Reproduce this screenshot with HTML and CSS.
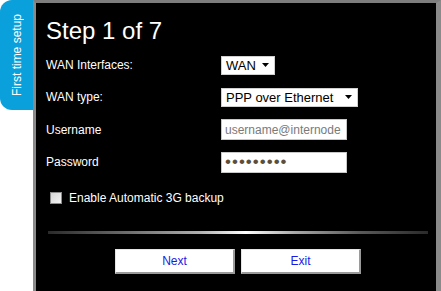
FILE: index.html
```html
<!DOCTYPE html>
<html>
<head>
<meta charset="utf-8">
<link rel="stylesheet" href="styles.css">
</head>
<body>
<div class="page">
  <aside class="tab"><span class="tab-text">First time setup</span></aside>
  <main class="panel">
    <h1 class="title">Step 1 of 7</h1>
    <div class="form">
      <div class="label">WAN Interfaces:</div>
      <div class="field">
        <div class="select select-wan"><span>WAN</span><svg class="arrow" width="7" height="4" viewBox="0 0 7 4"><path d="M0 0H7L3.5 4Z" fill="#000"/></svg></div>
      </div>
      <div class="label">WAN type:</div>
      <div class="field">
        <div class="select select-type"><span>PPP over Ethernet</span><svg class="arrow" width="7" height="4" viewBox="0 0 7 4"><path d="M0 0H7L3.5 4Z" fill="#000"/></svg></div>
      </div>
      <div class="label">Username</div>
      <div class="field">
        <div class="input placeholder">username@internode</div>
      </div>
      <div class="label">Password</div>
      <div class="field">
        <div class="input dots">•••••••••</div>
      </div>
    </div>
    <label class="check-row">
      <span class="checkbox"></span>
      <span class="check-label">Enable Automatic 3G backup</span>
    </label>
    <div class="separator"></div>
    <div class="buttons">
      <button class="btn">Next</button>
      <button class="btn">Exit</button>
    </div>
  </main>
</div>
</body>
</html>
```

FILE: styles.css
```css
html, body {
  margin: 0;
  padding: 0;
  background: #fff;
}
body {
  font-family: "Liberation Sans", Arial, sans-serif;
  font-size: 12px;
  color: #fff;
}
.page {
  display: flex;
  width: 441px;
  height: 291px;
  overflow: hidden;
}
.tab {
  flex: 0 0 33px;
  height: 110px;
  background: #09a0dc;
  border-radius: 12px 0 0 12px;
  display: flex;
  align-items: center;
  justify-content: center;
}
.tab-text {
  writing-mode: vertical-rl;
  transform: rotate(180deg);
  color: #fff;
  font-size: 12px;
  white-space: nowrap;
  margin-left: 1px;
}
.panel {
  flex: 1;
  background: #000;
  border-top: 3px solid #7d7d7d;
  border-left: 3px solid #8a8a8a;
  border-right: 5px solid #8a8a8a;
  padding: 14px 8px 0 10px;
  display: flex;
  flex-direction: column;
}
.title {
  margin: 0;
  font-size: 24px;
  line-height: 28px;
  font-weight: normal;
  color: #fff;
}
.form {
  margin-top: 4px;
  display: grid;
  grid-template-columns: 175px auto;
  grid-template-rows: 32px 32px 33px 32px;
  align-items: center;
}
.label {
  color: #fff;
  line-height: 14px;
}
.field {
  display: flex;
  align-items: center;
}
.select {
  box-sizing: border-box;
  height: 19px;
  background: #fff;
  border: 1px solid #d0d0d0;
  color: #000;
  display: flex;
  align-items: center;
  justify-content: space-between;
  padding: 0 5px 0 4px;
  font-size: 13px;
}
.select-wan { width: 54px; }
.select-type { width: 137px; }
.arrow { display: block; flex: none; }
.input {
  box-sizing: border-box;
  width: 126px;
  height: 21px;
  background: #fff;
  border: 1px solid #c8c8c8;
  padding: 0 3px;
  display: flex;
  align-items: center;
  overflow: hidden;
  white-space: nowrap;
  font-size: 12px;
}
.placeholder { color: #7a7a7a; }
.dots {
  color: #5b4f3c;
  font-size: 17px;
  letter-spacing: 1px;
  padding-left: 3px;
}
.check-row {
  margin-top: 13px;
  margin-left: 4px;
  display: flex;
  align-items: center;
  gap: 7px;
  height: 14px;
}
.checkbox {
  box-sizing: border-box;
  width: 12px;
  height: 12px;
  border: 1px solid #8c8c8c;
  background: linear-gradient(135deg, #d6d6d6, #f4f4f4);
  flex: none;
}
.check-label { color: #fff; }
.separator {
  margin: 26px 0 0 2px;
  width: 380px;
  height: 3px;
  background: linear-gradient(to right, #2a2a2a 0%, #6a6a6a 20%, #b0b0b0 40%, #ffffff 52%, #a8a8a8 65%, #5a5a5a 82%, #2a2a2a 100%);
}
.buttons {
  margin-top: 15px;
  display: flex;
  justify-content: center;
  gap: 6px;
  padding-left: 2px;
}
.btn {
  box-sizing: border-box;
  width: 120px;
  height: 25px;
  background: #fff;
  border: none;
  border-top: 1px solid #e6e6e6;
  border-left: 1px solid #e6e6e6;
  border-right: 2px solid #9a9a9a;
  border-bottom: 2px solid #9a9a9a;
  color: #1a1ae6;
  font-family: "Liberation Sans", Arial, sans-serif;
  font-size: 12px;
  padding: 0;
}
```
